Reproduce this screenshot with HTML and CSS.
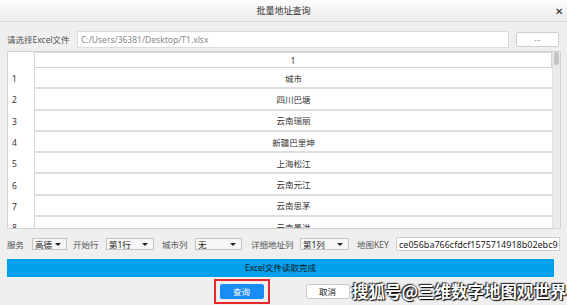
FILE: index.html
```html
<!DOCTYPE html>
<html lang="zh-CN">
<head>
    <meta charset="UTF-8">
    <title>批量地址查询</title>
    <link rel="stylesheet" href="styles.css">
</head>
<body>
    <div class="dialog">
        <div class="titlebar">
            <span class="title">批量地址查询</span>
            <span class="close">✕</span>
        </div>

        <div class="content">
            <div class="file-row">
                <span class="file-label">请选择Excel文件</span>
                <div class="path">C:/Users/36381/Desktop/T1.xlsx</div>
                <button class="browse">...</button>
            </div>

            <div class="table-wrap">
                <div class="grid">
                    <div class="row head">
                        <div class="num"></div>
                        <div class="cell">1</div>
                    </div>
                    <div class="row"><div class="num">1</div><div class="cell">城市</div></div>
                    <div class="row"><div class="num">2</div><div class="cell">四川巴塘</div></div>
                    <div class="row"><div class="num">3</div><div class="cell">云南瑞丽</div></div>
                    <div class="row"><div class="num">4</div><div class="cell">新疆巴里坤</div></div>
                    <div class="row"><div class="num">5</div><div class="cell">上海松江</div></div>
                    <div class="row"><div class="num">6</div><div class="cell">云南元江</div></div>
                    <div class="row"><div class="num">7</div><div class="cell">云南思茅</div></div>
                    <div class="row"><div class="num">8</div><div class="cell">云南景洪</div></div>
                </div>
                <div class="scrollbar"><div class="thumb"></div></div>
            </div>

            <div class="opts">
                <span class="opt-label lbl-service">服务</span>
                <div class="select sel-service">高德<span class="arrow"></span></div>
                <span class="opt-label lbl-start">开始行</span>
                <div class="select sel-start">第1行<span class="arrow"></span></div>
                <span class="opt-label lbl-city">城市列</span>
                <div class="select sel-city">无<span class="arrow"></span></div>
                <span class="opt-label lbl-addr">详细地址列</span>
                <div class="select sel-addr">第1列<span class="arrow"></span></div>
                <span class="opt-label lbl-key">地图KEY</span>
                <div class="key-input">ce056ba766cfdcf1575714918b02ebc9</div>
            </div>

            <div class="status">Excel文件读取完成</div>

            <div class="actions">
                <div class="highlight"><button class="btn btn-primary">查询</button></div>
                <button class="btn btn-cancel">取消</button>
            </div>
        </div>

        <div class="watermark">搜狐号@三维数字地图观世界</div>
    </div>
</body>
</html>
```

FILE: styles.css
```css
body {
    margin: 0;
    padding: 0;
    font-family: "Noto Sans", "Noto Sans CJK SC", sans-serif;
    font-size: 8.5px;
    color: #333;
    background-color: #efefef;
}
.dialog {
    position: relative;
    width: 567px;
    height: 305px;
    overflow: hidden;
    background-color: #efefef;
}
.titlebar {
    height: 21px;
    display: flex;
    align-items: center;
    justify-content: center;
    position: relative;
    background: linear-gradient(#fdfdfd, #ebebeb);
    border-bottom: 1px solid #d6d6d6;
}
.title {
    font-size: 9px;
    color: #333;
}
.close {
    position: absolute;
    right: 4px;
    top: 4px;
    font-size: 10px;
    color: #222;
}
.content {
    padding: 0 6px 0 7px;
}

/* file chooser row */
.file-row {
    display: flex;
    align-items: center;
    height: 16px;
    margin-top: 9px;
    padding-right: 2px;
}
.file-label {
    width: 70px;
    color: #555;
    white-space: nowrap;
}
.path {
    flex: 1;
    height: 15px;
    line-height: 15px;
    background-color: white;
    border: 1px solid #dcdcdc;
    padding-left: 3px;
    color: #888;
}
.browse {
    width: 43px;
    height: 15px;
    margin-left: 7px;
    padding: 0;
    background-color: white;
    border: 1px solid #cfcfcf;
    border-radius: 2px;
    font-size: 8px;
    color: #555;
    line-height: 8px;
}

/* table */
.table-wrap {
    display: flex;
    height: 176px;
    margin-top: 4px;
    background-color: white;
    border: 1px solid #d2d2d2;
    overflow: hidden;
}
.grid {
    flex: 1;
}
.row {
    display: flex;
    height: 21.3px;
}
.row.head {
    height: 16px;
}
.num {
    width: 26px;
    padding-left: 4px;
    box-sizing: border-box;
    display: flex;
    align-items: center;
    color: #333;
}
.cell {
    flex: 1;
    display: flex;
    align-items: center;
    justify-content: center;
    border-left: 1px solid #d8d8d8;
    border-bottom: 2px solid #dedede;
    color: #333;
}
.row.head .cell {
    border-top: 1px solid #d8d8d8;
    border-right: 1px solid #d8d8d8;
    border-bottom: 1px solid #d0d0d0;
}
.scrollbar {
    width: 7px;
    background-color: #ececec;
    border-left: 1px solid #e0e0e0;
}
.thumb {
    height: 13px;
    margin: 0 1px;
    background-color: #c4c4c4;
    border-radius: 2px;
}

/* options row */
.opts {
    display: flex;
    align-items: center;
    height: 14px;
    margin-top: 8px;
}
.opt-label {
    color: #555;
    white-space: nowrap;
}
.lbl-service { width: 25px; }
.lbl-start { width: 33px; }
.lbl-city { width: 33px; }
.lbl-addr { width: 49px; }
.lbl-key { width: 39px; }
.select {
    position: relative;
    height: 12px;
    line-height: 12px;
    box-sizing: border-box;
    padding-left: 2px;
    background-color: #f7f7f7;
    border: 1px solid #c4c4c4;
    color: #222;
}
.arrow {
    position: absolute;
    right: 5px;
    top: 4px;
    border-left: 3px solid transparent;
    border-right: 3px solid transparent;
    border-top: 3px solid #222;
}
.sel-service { width: 35px; margin-right: 6px; }
.sel-start { width: 48px; margin-right: 8px; }
.sel-city { width: 47px; margin-right: 9px; }
.sel-addr { width: 49px; margin-right: 8px; }
.key-input {
    width: 164px;
    height: 14px;
    line-height: 14px;
    box-sizing: border-box;
    padding-left: 2px;
    background-color: white;
    border: 1px solid #d0d0d0;
    color: #222;
    font-size: 9px;
    white-space: nowrap;
    overflow: hidden;
}

/* status bar */
.status {
    height: 18px;
    line-height: 18px;
    margin-top: 8px;
    margin-right: 7px;
    background-color: #00a0ec;
    color: #1a1a1a;
    text-align: center;
}

/* buttons */
.actions {
    display: flex;
    align-items: center;
    justify-content: center;
    gap: 36px;
    margin-top: 2px;
    padding-right: 5px;
}
.highlight {
    padding: 3px 4px;
    border: 2px solid #e8262b;
}
.btn {
    width: 44px;
    height: 15px;
    padding: 0;
    font-family: "Noto Sans CJK SC", sans-serif;
    font-size: 8.5px;
    line-height: 13px;
    border-radius: 2px;
}
.btn-primary {
    background-color: #1a8cf6;
    border: 1px solid #1a8cf6;
    color: white;
}
.btn-cancel {
    background-color: white;
    border: 1px solid #c8c8c8;
    color: #222;
}

/* overlay watermark */
.watermark {
    position: absolute;
    left: 352px;
    top: 279px;
    font-family: "Noto Sans CJK SC", sans-serif;
    font-size: 16.5px;
    font-weight: bold;
    color: white;
    white-space: nowrap;
    text-shadow: 0 0 2px #000, 1px 1px 1px #000, -1px -1px 1px #333;
}
```
